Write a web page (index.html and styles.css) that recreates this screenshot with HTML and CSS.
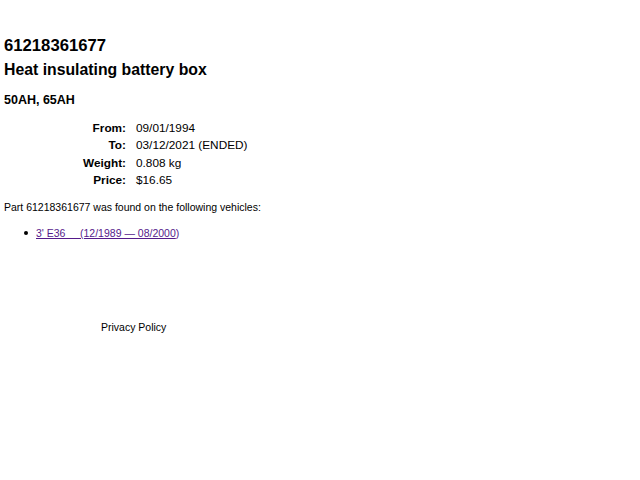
FILE: index.html
```html
<!DOCTYPE html>
<html>
<head>
<meta charset="utf-8">
<link rel="stylesheet" href="styles.css">
</head>
<body>
<h1 class="part-no">61218361677</h1>
<h2 class="part-name">Heat insulating battery box</h2>
<h3 class="part-note">50AH, 65AH</h3>
<table class="specs">
<tr><th>From:</th><td>09/01/1994</td></tr>
<tr><th>To:</th><td>03/12/2021 (ENDED)</td></tr>
<tr><th>Weight:</th><td>0.808 kg</td></tr>
<tr><th>Price:</th><td>$16.65</td></tr>
</table>
<p class="found">Part 61218361677 was found on the following vehicles:</p>
<ul class="vehicles">
<li><a href="#">3' E36 &nbsp;&nbsp;&nbsp; (12/1989 — 08/2000</a><span class="paren">)</span></li>
</ul>
<div class="footer"><span>Privacy Policy</span></div>
</body>
</html>
```
FILE: styles.css
```css
html, body {
  background: #fff;
}
body {
  margin: 0;
  padding: 0 4px;
  font-family: "Liberation Sans", Arial, Helvetica, sans-serif;
  color: #000;
}
.part-no {
  font-size: 16.7px;
  font-weight: bold;
  margin: 36px 0 0 0;
  line-height: 20px;
}
.part-name {
  font-size: 15.8px;
  font-weight: bold;
  margin: 4px 0 0 0;
  line-height: 20px;
}
.part-note {
  font-size: 12.5px;
  font-weight: bold;
  margin: 12px 0 0 0;
  line-height: 16px;
}
.specs {
  margin: 12px 0 0 0;
  border-collapse: collapse;
  font-size: 11.8px;
}
.specs th {
  width: 122px;
  text-align: right;
  font-weight: bold;
  padding: 0 10px 0 0;
  line-height: 17.3px;
}
.specs td {
  padding: 0;
  line-height: 17.3px;
}
.found {
  font-size: 10.5px;
  margin: 11px 0 0 0;
  line-height: 14px;
}
.vehicles {
  list-style: none;
  font-size: 10.5px;
  margin: 12px 0 0 0;
  padding-left: 20px;
  line-height: 14px;
}
.vehicles li::before {
  content: "";
  display: inline-block;
  width: 4px;
  height: 4px;
  border-radius: 50%;
  background: #000;
  margin: 0 8px 2px 0;
  vertical-align: middle;
}
.vehicles a, .vehicles .paren {
  color: #551a8b;
}
.footer {
  font-size: 10.5px;
  margin: 80px 0 0 0;
  padding-left: 97px;
  line-height: 14px;
}
```
